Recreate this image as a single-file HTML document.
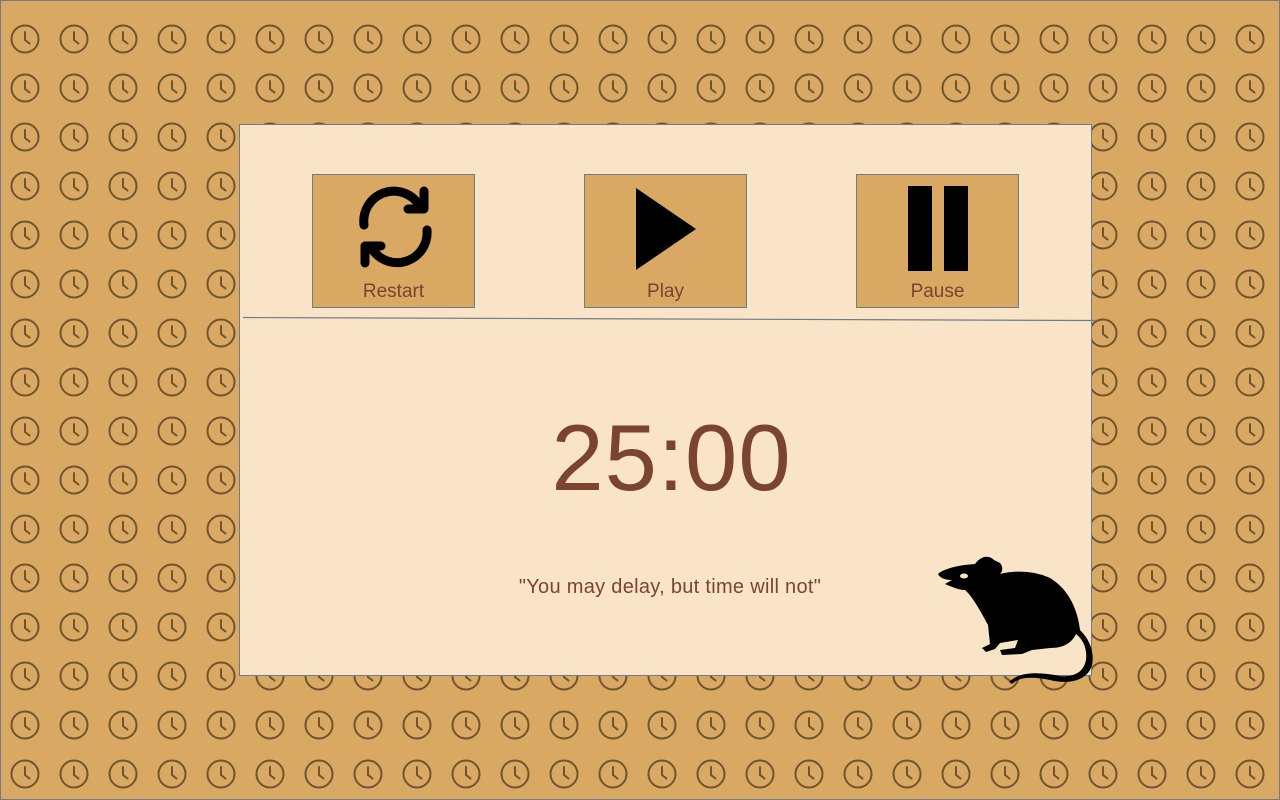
<!DOCTYPE html>
<html><head><style>
html,body{margin:0;padding:0}
body{width:1280px;height:800px;position:relative;overflow:hidden;background:#d9a862;font-family:"Liberation Sans",sans-serif}
.frame{position:absolute;left:0;top:0;width:1278px;height:798px;border:1px solid #6f7b88}
svg.bg{position:absolute;left:0;top:0}
.panel{position:absolute;left:239px;top:124px;width:851px;height:550px;background:#f9e4c8;border:1px solid #6f7b88}
.btn{position:absolute;top:174px;width:161px;height:132px;background:#d9a862;border:1px solid #6f7b88;color:#7a4430;font-size:19px;text-align:center}
.btn span{position:absolute;left:0;right:0;top:105px;line-height:24px}
.btn svg{position:absolute;left:0;top:0}
.time{position:absolute;left:251px;width:841px;top:398px;text-align:center;color:#7a4430;font-size:94px;line-height:120px;letter-spacing:1px}
.quote{position:absolute;left:239px;width:862px;top:574px;text-align:center;color:#7a4430;font-size:20px;line-height:26px;letter-spacing:0.3px}
</style></head><body>
<svg class="bg" width="1280" height="800">
<defs><pattern id="c" x="0.5" y="14.5" width="49" height="49" patternUnits="userSpaceOnUse">
<g fill="none" stroke="#6e5530" stroke-width="2" stroke-linecap="round">
<circle cx="24.5" cy="24.5" r="13.5"/>
<path d="M24.5 17.5V25.5L29 29"/>
</g></pattern></defs>
<rect y="14" width="1280" height="786" fill="url(#c)"/>
</svg>
<div class="frame"></div>
<div class="panel"></div>
<svg class="bg" width="1280" height="800"><line x1="243" y1="317.5" x2="1095" y2="320.5" stroke="#6f7b88" stroke-width="1.2"/></svg>
<div class="btn" style="left:312px">
<svg width="161" height="105" viewBox="0 0 161 105"><g fill="none" stroke="#000" stroke-width="9" stroke-linecap="round" stroke-linejoin="round">
<path d="M51 50A30 30 0 0 1 106 30"/><path d="M111 16V34H95"/>
<path d="M114 55A30 30 0 0 1 59 74"/><path d="M52 88V71H68"/></g></svg>
<span>Restart</span></div>
<div class="btn" style="left:584px">
<svg width="161" height="105"><path d="M51 13L111 54L51 95Z" fill="#000"/></svg>
<span>Play</span></div>
<div class="btn" style="left:856px">
<svg width="161" height="105"><rect x="51" y="11" width="24" height="85" fill="#000"/><rect x="87" y="11" width="24" height="85" fill="#000"/></svg>
<span>Pause</span></div>
<div class="time">25:00</div>
<div class="quote">"You may delay, but time will not"</div>
<svg class="bg" width="1280" height="800">
<path fill="#000" d="M938 574C945 568 960 565 975 564C980 557 988 554 994 560L1000 563C1004 568 1002 572 1000 574C1015 570 1035 571 1050 578C1070 590 1078 612 1080 630C1088 638 1095 650 1092 665C1088 680 1070 685 1050 680C1035 677 1020 676 1012 684L1009 682C1020 671 1040 672 1060 676C1078 678 1088 668 1086 652C1085 643 1080 637 1076 634C1072 642 1065 648 1050 648L1032 650L1022 654L1002 655L1000 650L1015 648L1018 640L1000 643L995 649L986 652L982 648L990 644L988 625C980 610 972 596 965 590C958 590 950 586 945 584L952 580C945 580 940 578 938 574Z"/>
<ellipse cx="964" cy="576" rx="4" ry="2.5" fill="#f9e4c8"/>
</svg>
</body></html>
